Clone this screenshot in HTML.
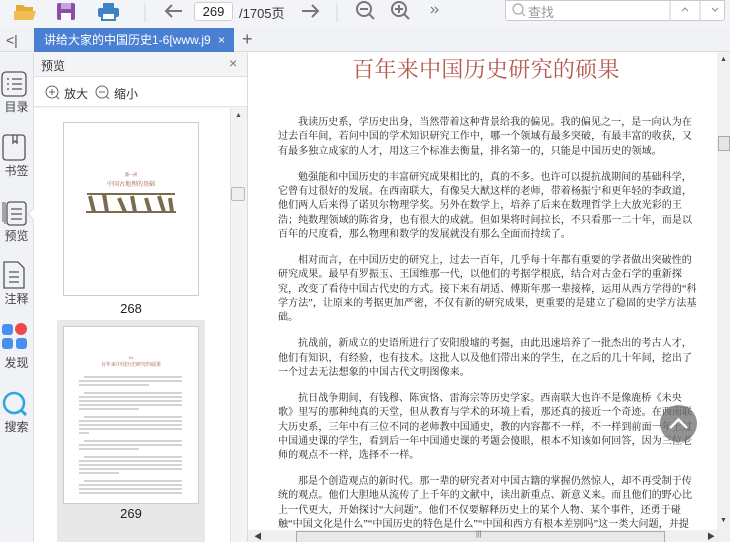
<!DOCTYPE html>
<html><head><meta charset="utf-8"><style>
*{margin:0;padding:0;box-sizing:border-box}
body{width:730px;height:542px;overflow:hidden;background:#f2f4f7;font-family:"Liberation Sans","Noto Sans CJK SC",sans-serif;position:relative}
.abs{position:absolute}
.ui{font-size:12px;color:#333}
.doc{position:absolute;left:248px;top:52px;width:469px;height:478px;background:#fff;overflow:hidden}
.title{position:absolute;left:0;width:476px;top:3px;text-align:center;font-family:"Liberation Serif","Noto Serif CJK SC",serif;font-size:22px;color:#b5574d;letter-spacing:0.3px;line-height:30px}
.txt{position:absolute;left:30px;top:64px;font-family:"Liberation Serif","Noto Serif CJK SC",serif;font-size:10px;line-height:14.4px;color:#222;letter-spacing:0.1px;white-space:nowrap}
.txt p{margin-bottom:11.3px}
.txt .i{padding-left:20px}
.lbl{position:absolute;left:0;width:33px;text-align:center;font-size:12px;color:#444}
</style></head><body>
<!-- toolbar -->
<div class="abs" style="left:0;top:0;width:730px;height:28px;background:#f2f4f7"></div>
<svg class="abs" style="left:0;top:0" width="730" height="28">
 <path d="M16 5h7l2 2h8v4H16z" fill="#e5a93a"/><path d="M14 11h22l-3 9H14z" fill="#f1bd52"/>
 <rect x="57" y="3" width="18" height="17" rx="2" fill="#8a4fa6"/><rect x="61" y="3" width="10" height="6" fill="#c9a3dc"/><rect x="61" y="13" width="10" height="7" fill="#fff"/>
 <rect x="98" y="8" width="21" height="9" rx="2" fill="#3d84c6"/><rect x="103" y="3" width="11" height="5" fill="#3d84c6"/><rect x="102" y="13" width="13" height="7" fill="#fff" stroke="#3d84c6" stroke-width="2"/>
 <line x1="145" y1="3" x2="145" y2="22" stroke="#d5d8dc"/>
 <path d="M182 11H166M172 5l-6 6 6 6" stroke="#777" stroke-width="2" fill="none"/>
 <path d="M302 11h16M312 5l6 6-6 6" stroke="#777" stroke-width="2" fill="none"/>
 <line x1="337" y1="3" x2="337" y2="22" stroke="#d5d8dc"/>
 <circle cx="364" cy="9" r="7" fill="none" stroke="#777" stroke-width="2"/><path d="M360 9h8M369 14l5 5" stroke="#777" stroke-width="2"/>
 <circle cx="399" cy="9" r="7" fill="none" stroke="#777" stroke-width="2"/><path d="M395 9h8M399 5v8M404 14l5 5" stroke="#777" stroke-width="2"/>
 <path d="M431 7l3 3-3 3M435 7l3 3-3 3" stroke="#777" stroke-width="1.2" fill="none"/>
</svg>
<div class="abs" style="left:194px;top:2px;width:39px;height:19px;background:#fff;border:1px solid #ccd0d5;border-radius:3px;font-size:13px;text-align:center;line-height:17px;color:#222">269</div>
<div class="abs ui" style="left:239px;top:3px;font-size:13px">/1705页</div>
<div class="abs" style="left:505px;top:0;width:220px;height:21px;background:#fff;border:1px solid #c8ccd2;border-radius:0 0 3px 3px"></div>
<svg class="abs" style="left:505px;top:0" width="225" height="22"><circle cx="13" cy="9" r="5" fill="none" stroke="#aaa" stroke-width="1.2"/><path d="M17 13l3 3" stroke="#aaa" stroke-width="1.2"/><line x1="165" y1="0" x2="165" y2="21" stroke="#ccc"/><line x1="195" y1="0" x2="195" y2="21" stroke="#ccc"/><path d="M177 11l3-3 3 3M207 8l3 3 3-3" stroke="#888" fill="none"/></svg>
<div class="abs" style="left:528px;top:2px;font-size:13px;color:#999">查找</div>
<!-- tab bar -->
<div class="abs" style="left:0;top:28px;width:730px;height:24px;background:#f0f2f5;border-bottom:1px solid #d8dadd"></div>
<div class="abs" style="left:6px;top:32px;font-size:14px;color:#555">&lt;|</div>
<div class="abs" style="left:34px;top:28px;width:200px;height:24px;background:#4a7fd2;color:#fff;font-size:12px;line-height:24px;padding-left:10px;white-space:nowrap;overflow:hidden">讲给大家的中国历史1-6[www.j9 <span style="position:absolute;left:184px">×</span></div>
<div class="abs" style="left:242px;top:29px;font-size:18px;color:#666">+</div>
<!-- left rail -->
<div class="abs" style="left:0;top:53px;width:34px;height:489px;background:#f0f2f5;border-right:1px solid #dcdfe3"></div>
<svg class="abs" style="left:0;top:60px" width="34" height="380">
 <rect x="2" y="12" width="24" height="24" rx="4" fill="none" stroke="#555" stroke-width="1.3"/><path d="M7 19h2M12 19h10M7 24h2M12 24h10M7 29h2M12 29h10" stroke="#555" stroke-width="1.3"/>
 <rect x="3" y="75" width="22" height="25" rx="3" fill="none" stroke="#555" stroke-width="1.3"/><path d="M13 75v8l2-2 2 2v-8" stroke="#555" fill="none" stroke-width="1.3"/>
 <path d="M3 162v-20M5 164v-22" stroke="#555"/><rect x="7" y="142" width="19" height="23" rx="3" fill="none" stroke="#555" stroke-width="1.3"/><path d="M11 149h11M11 154h11M11 159h11" stroke="#555" stroke-width="1.3"/>
 <path d="M4 202h14l6 6v20H4z" fill="none" stroke="#555" stroke-width="1.3"/><path d="M9 212h10M9 217h10M9 222h10" stroke="#555" stroke-width="1.3"/>
 <rect x="2" y="264" width="11" height="11" rx="3" fill="#4a8ef0"/><circle cx="21" cy="269" r="6" fill="#f04848"/><rect x="2" y="278" width="11" height="11" rx="3" fill="#4a8ef0"/><rect x="16" y="278" width="11" height="11" rx="3" fill="#4a8ef0"/>
 <circle cx="14" cy="343" r="10" fill="none" stroke="#2aa6e0" stroke-width="2.5"/><path d="M21 350l5 5" stroke="#2aa6e0" stroke-width="3"/>
 <path d="M34 148l-6 6 6 6" fill="#fff" stroke="#dcdfe3"/>
</svg>
<div class="lbl" style="top:98px">目录</div>
<div class="lbl" style="top:162px">书签</div>
<div class="lbl" style="top:227px">预览</div>
<div class="lbl" style="top:290px">注释</div>
<div class="lbl" style="top:354px">发现</div>
<div class="lbl" style="top:418px">搜索</div>
<!-- preview panel -->
<div class="abs" style="left:34px;top:53px;width:213px;height:24px;background:#f3f4f6;border-bottom:1px solid #dcdfe3"></div>
<div class="abs ui" style="left:41px;top:57px">预览</div>
<div class="abs" style="left:229px;top:55px;font-size:14px;color:#777">×</div>
<div class="abs" style="left:34px;top:77px;width:213px;height:30px;background:#fff;border-bottom:1px solid #e3e5e8"></div>
<svg class="abs" style="left:44px;top:84px" width="70" height="16"><circle cx="8" cy="8" r="6" fill="none" stroke="#666"/><path d="M5 8h6M8 5v6M12 12l3 3" stroke="#666"/><circle cx="58" cy="8" r="6" fill="none" stroke="#666"/><path d="M55 8h6M62 12l3 3" stroke="#666"/></svg>
<div class="abs ui" style="left:64px;top:85px">放大</div>
<div class="abs ui" style="left:114px;top:85px">缩小</div>
<div class="abs" style="left:34px;top:108px;width:196px;height:434px;background:#fff"></div>
<div class="abs" style="left:230px;top:108px;width:17px;height:434px;background:#f3f3f3;border-left:1px solid #e2e2e2"></div>
<div class="abs" style="left:231px;top:187px;width:14px;height:14px;background:#eee;border:1px solid #bbb;border-radius:2px"></div>
<div class="abs" style="left:235px;top:112px;font-size:7px;color:#555">▲</div>
<div class="abs" style="left:63px;top:122px;width:136px;height:174px;border:1px solid #ccc;background:#fff"></div>
<div class="abs" style="left:63px;top:172px;width:136px;text-align:center;font-size:4px;color:#a05545">第一讲</div>
<div class="abs" style="left:63px;top:179px;width:136px;text-align:center;font-size:6px;color:#a05545;font-family:'Noto Serif CJK SC',serif">中国古地理的基础</div>
<svg class="abs" style="left:84px;top:190px" width="94" height="24"><path d="M2 22h90M3 4h88" stroke="#7a6c4e" stroke-width="2"/><path d="M6 6l4 16M20 4l3 18M35 8l6 14M48 6l3 16M62 8l4 14M75 6l5 16M86 8l2 14" stroke="#7a6c4e" stroke-width="4"/></svg>
<div class="abs ui" style="left:63px;top:301px;width:136px;text-align:center;font-size:13px;color:#222">268</div>
<div class="abs" style="left:57px;top:320px;width:148px;height:222px;background:#e8e8e8"></div>
<div class="abs" style="left:63px;top:326px;width:136px;height:178px;border:1px solid #ccc;background:#fff"></div>
<div class="abs" style="left:63px;top:355px;width:136px;text-align:center;font-size:4px;color:#a05545">01</div>
<div class="abs" style="left:63px;top:361px;width:136px;text-align:center;font-size:5px;color:#a05545;font-family:'Noto Serif CJK SC',serif">百年来中国历史研究的硕果</div>
<svg class="abs" style="left:79px;top:375px" width="105" height="125">
<g stroke="#bbb" stroke-width="1.2">
<path d="M5 2h98M0 6h103M0 10h70"/><path d="M5 18h98M0 22h103M0 26h103M0 30h103M0 34h60"/><path d="M5 42h98M0 46h103M0 50h103M0 54h103M0 58h10"/><path d="M5 66h98M0 70h103M0 74h60"/><path d="M5 82h98M0 86h103M0 90h103M0 94h103M0 98h40"/><path d="M5 106h98M0 110h103M0 114h103M0 118h103"/></g></svg>
<div class="abs ui" style="left:63px;top:506px;width:136px;text-align:center;font-size:13px;color:#222">269</div>
<!-- document -->
<div class="abs" style="left:247px;top:53px;width:1px;height:489px;background:#d8dadd"></div>
<div class="doc">
<div class="title">百年来中国历史研究的硕果</div>
<div class="txt">
<p><span class="i"></span>我读历史系，学历史出身，当然带着这种背景给我的偏见。我的偏见之一，是一向认为在<br>过去百年间，若问中国的学术知识研究工作中，哪一个领域有最多突破，有最丰富的收获，又<br>有最多独立成家的人才，用这三个标准去衡量，排名第一的，只能是中国历史的领域。</p>
<p><span class="i"></span>勉强能和中国历史的丰富研究成果相比的，真的不多。也许可以提抗战期间的基础科学，<br>它曾有过很好的发展。在西南联大，有像吴大猷这样的老师，带着杨振宁和更年轻的李政道，<br>他们两人后来得了诺贝尔物理学奖。另外在数学上，培养了后来在数理哲学上大放光彩的王<br>浩；纯数理领域的陈省身，也有很大的成就。但如果将时间拉长，不只看那一二十年，而是以<br>百年的尺度看，那么物理和数学的发展就没有那么全面而持续了。</p>
<p><span class="i"></span>相对而言，在中国历史的研究上，过去一百年，几乎每十年都有重要的学者做出突破性的<br>研究成果。最早有罗振玉、王国维那一代，以他们的考据学根底，结合对古金石学的重新探<br>究，改变了看待中国古代史的方式。接下来有胡适、傅斯年那一辈接棒，运用从西方学得的“科<br>学方法”，让原来的考据更加严密，不仅有新的研究成果，更重要的是建立了稳固的史学方法基<br>础。</p>
<p><span class="i"></span>抗战前，新成立的史语所进行了安阳殷墟的考掘，由此迅速培养了一批杰出的考古人才，<br>他们有知识，有经验，也有技术。这批人以及他们带出来的学生，在之后的几十年间，挖出了<br>一个过去无法想象的中国古代文明图像来。</p>
<p><span class="i"></span>抗日战争期间，有钱穆、陈寅恪、雷海宗等历史学家。西南联大也许不是像鹿桥《未央<br>歌》里写的那种纯真的天堂，但从教育与学术的环境上看，那还真的接近一个奇迹。在西南联<br>大历史系，三年中有三位不同的老师教中国通史，教的内容都不一样，不一样到前面一年上过<br>中国通史课的学生，看到后一年中国通史课的考题会傻眼，根本不知该如何回答，因为三位老<br>师的观点不一样，选择不一样。</p>
<p><span class="i"></span>那是个创造观点的新时代。那一辈的研究者对中国古籍的掌握仍然惊人，却不再受制于传<br>统的观点。他们大胆地从流传了上千年的文献中，读出新重点、新意义来。而且他们的野心比<br>上一代更大，开始探讨“大问题”。他们不仅要解释历史上的某个人物、某个事件，还勇于碰<br>触“中国文化是什么”“中国历史的特色是什么”“中国和西方有根本差别吗”这一类大问题，并提</p>
</div>
</div>
<div class="abs" style="left:660px;top:405px;width:37px;height:37px;border-radius:50%;background:rgba(110,110,110,0.75)"></div>
<svg class="abs" style="left:660px;top:405px" width="37" height="37"><path d="M10 23l8.5-8.5L27 23" stroke="#fff" stroke-width="2.5" fill="none"/></svg>
<!-- right scrollbar -->
<div class="abs" style="left:717px;top:53px;width:13px;height:489px;background:#f0f0f0"></div>
<div class="abs" style="left:718px;top:136px;width:12px;height:15px;background:#e6e6e6;border:1px solid #aaa"></div>
<div class="abs" style="left:720px;top:56px;font-size:7px;color:#444">▲</div>
<div class="abs" style="left:720px;top:517px;font-size:7px;color:#444">▼</div>
<!-- bottom scrollbar -->
<div class="abs" style="left:248px;top:530px;width:469px;height:12px;background:#f0f0f0"></div>
<div class="abs" style="left:296px;top:531px;width:369px;height:11px;background:#e8e8e8;border:1px solid #aaa;border-bottom:none"></div>
<div class="abs" style="left:476px;top:531px;font-size:7px;color:#666">|||</div>
<div class="abs" style="left:254px;top:531px;font-size:8px;color:#444">◀</div>
<div class="abs" style="left:707px;top:531px;font-size:8px;color:#444">▶</div>
</body></html>
